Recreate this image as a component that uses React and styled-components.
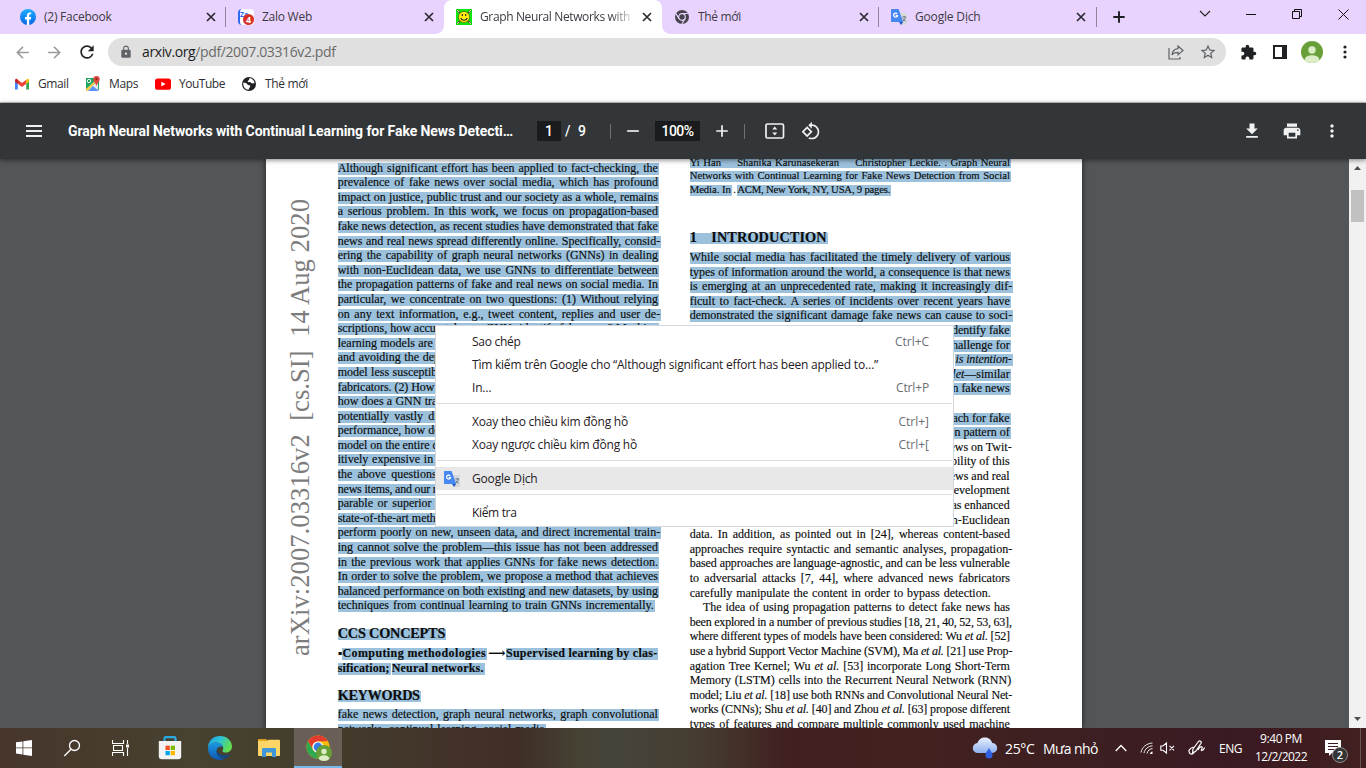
import React, { useLayoutEffect, useRef } from 'react';
import styled, { createGlobalStyle, css } from 'styled-components';
import { MdRemove, MdPrint, MdMoreVert, MdLock, MdExtension, MdStarBorder, MdRefresh, MdArrowBack, MdArrowForward, MdRotate90DegreesCcw } from 'react-icons/md';

const UI = '"Open Sans", "Noto Sans", sans-serif';
const SERIF = '"Liberation Serif", "DejaVu Serif", serif';

const Global = createGlobalStyle`
  * { box-sizing: border-box; }
  body { margin: 0; overflow: hidden; background: #fff; font-family: ${UI}; font-size: 12px; }
  svg { display: block; flex: none; }
`;

/* ---------- text that fills a known width ---------- */
const FitSpan = styled.span`
  display: inline-block;
  white-space: pre;
`;

function Fit({ w, justify, children }) {
  const ref = useRef(null);
  useLayoutEffect(() => {
    const el = ref.current;
    el.style.letterSpacing = '';
    el.style.wordSpacing = '';
    const box = el.getBoundingClientRect();
    const natural = Math.max(box.width, box.height);
    const text = el.textContent;
    const gaps = text.split(' ').length - 1;
    const room = w - natural;
    if (justify && gaps > 0 && room > 0) {
      el.style.wordSpacing = `${room / gaps}px`;
    } else {
      el.style.letterSpacing = `${room / text.length}px`;
    }
  }, [w, justify, children]);
  return <FitSpan ref={ref}>{children}</FitSpan>;
}

/* ---------- frame ---------- */
const Screen = styled.div`
  width: 1366px;
  height: 768px;
  display: flex;
  flex-direction: column;
  overflow: hidden;
`;

/* ---------- tab strip ---------- */
const TabStrip = styled.div`
  height: 34px;
  flex: none;
  display: flex;
  background: #e8d3fe;
  padding-left: 8px;
`;
const Tab = styled.div`
  width: ${p => p.$w}px;
  flex: none;
  height: 34px;
  display: flex;
  align-items: center;
  padding: 0 7px 0 12px;
  gap: 8px;
  color: #3c3a42;
  position: relative;
  &:nth-child(5) { padding-right: 8px; }
  ${p => p.$active && css`
    background: #fff;
    border-radius: 8px 8px 0 0;
    &::before, &::after {
      content: '';
      position: absolute;
      bottom: 0;
      width: 8px;
      height: 8px;
    }
    &::before { left: -8px; background: radial-gradient(circle at 0 0, transparent 7.5px, #fff 8px); }
    &::after { right: -8px; background: radial-gradient(circle at 100% 0, transparent 7.5px, #fff 8px); }
  `}
  ${p => p.$line && css`
    &::after {
      content: '';
      position: absolute;
      right: 0;
      top: 7px;
      width: 1px;
      height: 20px;
      background: #8f849b;
    }
  `}
`;
const TabTitle = styled.div`
  flex: 1;
  height: 18px;
  line-height: 18px;
  overflow: hidden;
  white-space: pre;
  ${p => p.$fade && css`mask-image: linear-gradient(90deg, #000 130px, transparent 156px);`}
`;
const NewTab = styled.div`
  width: 44px;
  display: flex;
  align-items: center;
  justify-content: center;
`;
const WindowButtons = styled.div`
  margin-left: auto;
  display: flex;
  height: 28px;
`;
const WindowButton = styled.div`
  width: 46px;
  display: flex;
  align-items: center;
  justify-content: center;
`;
const FavBox = styled.div`
  position: relative;
  width: 16px;
  height: 16px;
  flex: none;
`;
const ZaloTile = styled.div`
  width: 16px;
  height: 16px;
  border-radius: 4px;
  background: #fff;
  border-left: 2px solid #2c6cf0;
  color: #2c6cf0;
  font: bold 7px/12px "Open Sans", sans-serif;
`;
const FavBadge = styled.div`
  position: absolute;
  right: 0;
  bottom: 0;
  width: 11px;
  height: 11px;
  border-radius: 50%;
  background: #d93025;
  color: #fff;
  font: bold 9px/11px "Open Sans", sans-serif;
  text-align: center;
`;

const Close = ({ s = 8 }) => (
  <svg width="16" height="16" viewBox="-8 -8 16 16">
    <path d={`M${-s / 2} ${-s / 2}L${s / 2} ${s / 2}M${s / 2} ${-s / 2}L${-s / 2} ${s / 2}`} stroke="#2b2a30" strokeWidth="1.7" />
  </svg>
);
const Facebook = () => (
  <svg width="16" height="16" viewBox="0 0 16 16">
    <defs><linearGradient id="fb" x1="0" y1="0" x2="0" y2="1"><stop offset="0" stopColor="#1badff" /><stop offset="1" stopColor="#0866e6" /></linearGradient></defs>
    <circle cx="8" cy="8" r="8" fill="url(#fb)" />
    <path d="M6.900 16v-5.600H5V8h1.900V6.300C6.900 4.400 8 3.400 9.700 3.400c.8 0 1.500.15 1.500.15v1.800h-.9c-.9 0-1.100.5-1.100 1.100V8h2l-.35 2.400H9.200V16z" fill="#fff" />
  </svg>
);
const Smiley = () => (
  <svg width="16" height="16" viewBox="0 0 16 16">
    <rect width="16" height="16" fill="#0be80b" />
    <path d="M1 1l14 14M15 1L1 15" stroke="#5a4a2a" strokeWidth="1.600" />
    <path d="M1 1l2 2M15 1l-2 2M1 15l2-2M15 15l-2-2" stroke="#e8d8a0" strokeWidth="1" />
    <circle cx="8" cy="8" r="5.600" fill="#ffee10" stroke="#5a5a00" strokeWidth=".7" />
    <path d="M6.300 5v2M9.700 5v2M4.800 9c1 3 5.400 3 6.400 0" stroke="#222" strokeWidth="1.100" fill="none" />
  </svg>
);
const ChromeMono = () => (
  <svg width="16" height="16" viewBox="0 0 16 16">
    <circle cx="8" cy="8" r="7" fill="#45434c" />
    <circle cx="8" cy="8" r="3.300" fill="none" stroke="#e8d3fe" strokeWidth="1.200" />
    <path d="M8 4.500h6.500M5 9.700L1.800 4.200M11 9.800L7.800 15" stroke="#e8d3fe" strokeWidth="1.200" />
  </svg>
);
const Translate = () => (
  <svg width="16" height="16" viewBox="0 0 16 16">
    <path d="M8 4h7.200c.5 0 .8.300.8.800v10.400c0 .5-.3.800-.8.800H10z" fill="#d5d8dc" />
    <path d="M1 0h6.600l4.600 13H1c-.6 0-1-.4-1-1V1c0-.6.4-1 1-1z" fill="#4688f1" />
    <path d="M8 13h4.200L10 16z" fill="#2a56c6" />
    <path d="M11.500 8H15M13.200 7v1M14.500 8c-.3 2-1.500 3.400-2.600 4M12 9.500c.6 1.200 1.500 2 2.600 2.600" stroke="#5f6f80" strokeWidth=".9" fill="none" />
    <path d="M6.200 4.900A2 2 0 1 0 6.500 6.700H4.700" stroke="#fff" strokeWidth="1.200" fill="none" />
  </svg>
);

const TABS = [
  { w: 218, title: '(2) Facebook', tw: 67.5, icon: <Facebook />, line: true },
  {
    w: 218, title: 'Zalo Web', tw: 50,
    icon: <FavBox><ZaloTile>Za</ZaloTile><FavBadge>4</FavBadge></FavBox>,
  },
  { w: 218, title: 'Graph Neural Networks with C', tw: 160, icon: <Smiley />, active: true },
  { w: 217, title: 'Thẻ mới', tw: 43, icon: <ChromeMono />, line: true },
  { w: 218, title: 'Google Dịch', tw: 65.5, icon: <Translate />, line: true },
];

function Tabs() {
  return (
    <TabStrip>
      {TABS.map(t => (
        <Tab key={t.title} $w={t.w} $active={t.active} $line={t.line}>
          {t.icon}
          <TabTitle $fade={t.active}><Fit w={t.tw}>{t.title}</Fit></TabTitle>
          <Close />
        </Tab>
      ))}
      <NewTab>
        <svg width="12" height="12" viewBox="0 0 12 12"><path d="M6 .3v11.400M.3 6h11.400" stroke="#1f1d24" strokeWidth="1.900" /></svg>
      </NewTab>
      <WindowButtons>
        <WindowButton><svg width="12" height="8" viewBox="0 0 12 8"><path d="M1 1l5 5 5-5" fill="none" stroke="#222" strokeWidth="1.100" /></svg></WindowButton>
        <WindowButton><svg width="10" height="2"><path d="M0 1h10" stroke="#111" strokeWidth="1" shapeRendering="crispEdges" /></svg></WindowButton>
        <WindowButton><svg width="10" height="10" viewBox="0 0 10 10"><path d="M.5 2.500h7v7h-7zM2.500 2.500v-2h7v7h-2" fill="none" stroke="#111" /></svg></WindowButton>
        <WindowButton><svg width="11" height="11" viewBox="0 0 11 11"><path d="M.5.5l10 10M10.500.5l-10 10" stroke="#111" strokeWidth="1" /></svg></WindowButton>
      </WindowButtons>
    </TabStrip>
  );
}

/* ---------- address row ---------- */
const AddressRow = styled.div`
  height: 36px;
  flex: none;
  display: flex;
  align-items: center;
  padding-left: 13px;
  background: #fff;
`;
const NavButton = styled.div`
  width: ${p => p.$w || 32}px;
  flex: none;
  display: flex;
  color: ${p => p.$c || '#222'};
`;
const Omnibox = styled.div`
  width: 1118px;
  flex: none;
  height: 28px;
  margin-right: 11px;
  border-radius: 14px;
  background: #e0e0e0;
  display: flex;
  align-items: center;
  padding: 0 9px 0 11px;
  color: #5f6368;
`;
const Url = styled.div`
  font-size: 14px;
  line-height: 20px;
  flex: 1;
  margin-left: 9px;
  color: #6a6a6a;
  b { font-weight: 400; color: #1c1c1e; }
`;
const OmniIcon = styled.div`
  width: 32px;
  display: flex;
  justify-content: center;
  &:last-child { width: 18px; margin-left: 7px; }
`;
const Actions = styled.div`
  display: flex;
  align-items: center;
  color: #202124;
`;
const ActionCell = styled.div`
  width: ${p => p.$w || 32}px;
  display: flex;
  justify-content: center;
`;

const Person = ({ s }) => (
  <svg width={s} height={s} viewBox="0 0 22 22">
    <defs><clipPath id="pc"><circle cx="11" cy="11" r="11" /></clipPath></defs>
    <circle cx="11" cy="11" r="11" fill="#689f38" />
    <g clipPath="url(#pc)" fill="#dcedc8"><circle cx="11" cy="9" r="3.700" /><ellipse cx="11" cy="19" rx="7.400" ry="4.800" /></g>
  </svg>
);

/* ---------- bookmarks ---------- */
const Bookmarks = styled.div`
  height: 33px;
  flex: none;
  display: flex;
  align-items: center;
  padding: 0 0 5px 14px;
  border-bottom: 1px solid #c9c9c9;
  background: #fff;
  color: #2f2f33;
`;
const Bookmark = styled.div`
  width: ${p => p.$w}px;
  display: flex;
  align-items: center;
  gap: 8px;
`;
const Gmail = () => (
  <svg width="16" height="14" viewBox="0 0 16 14">
    <path d="M1 3v9.500h2.800V6z" fill="#4285f4" /><path d="M15 3v9.500h-2.800V6z" fill="#34a853" />
    <path d="M3.800 2.800L8 6l4.200-3.200v4L8 10 3.800 6.800z" fill="#ea4335" />
    <path d="M1 3.500C1 1.300 3 1 4 2.900v4L1 4.700z" fill="#c5221f" /><path d="M15 3.500c0-2.200-2-2.500-2.800-.6v4L15 4.700z" fill="#fbbc04" />
  </svg>
);
const Maps = () => (
  <svg width="16" height="16" viewBox="0 0 16 16">
    <path d="M1 2h13v12H1z" fill="#1fa463" /><path d="M2 15L13 4v11z" fill="#e8eaed" /><path d="M1 13L13 2h1L3 15H1z" fill="#ffd04b" />
    <path d="M3 15l5-5 6 5z" fill="#5a95f5" /><circle cx="4" cy="5" r="1.700" fill="none" stroke="#fff" strokeWidth=".9" />
    <path d="M11.500 0a3.200 3.200 0 0 1 3.200 3.200C14.700 6 12 7 11.500 10.500 11 7 8.300 6 8.300 3.200A3.200 3.200 0 0 1 11.500 0z" fill="#dd4b3e" /><circle cx="11.500" cy="3.200" r="1.100" fill="#822" />
  </svg>
);
const YouTube = () => (
  <svg width="16" height="16" viewBox="0 0 16 16"><rect y="2.400" width="16" height="11.400" rx="2.600" fill="#f00" /><path d="M6.300 5.700v4.800l4.300-2.400z" fill="#fff" /></svg>
);
const Globe = () => (
  <svg width="16" height="16" viewBox="0 0 16 16">
    <circle cx="8" cy="8" r="7" fill="#202124" />
    <path d="M2.300 6.500c1.500.3 3.500.2 4 1.800.3 1 1.500.8 2.300 1 1.200.4.800 1.700 0 2.300-.7.600-.4 1.600-1.200 2.200-2.900-.2-5.600-3-5.100-7.300zM8.500 2c-.6 1 .2 1.700-.8 2.300-.6.500-1.200.6-.9 1.500.6.900 1.800-.3 2.600.4.700.7 1.300 1.500 2.500 1.100.8-.3 1.300-.1 1.700 0C13.400 4.500 11 2.200 8.500 2z" fill="#fff" />
  </svg>
);

/* ---------- pdf toolbar ---------- */
const PdfBar = styled.div`
  height: 56px;
  flex: none;
  display: flex;
  align-items: center;
  background: #323639;
  color: #f1f1f1;
  font-family: Roboto, sans-serif;
  font-size: 14px;
  box-shadow: 0 1px 5px rgba(0, 0, 0, .5);
  position: relative;
  z-index: 2;
  padding-left: 24px;
`;
const PdfTitle = styled.div`
  width: 469px;
  margin-left: 24px;
  font-weight: 700;
  color: #fff;
`;
const DarkField = styled.div`
  width: ${p => p.$w}px;
  height: 20px;
  background: #191b1c;
  display: flex;
  align-items: center;
  justify-content: center;
  color: #fff;
  font-weight: 500;
`;
const PageTotal = styled.div`
  width: 45px;
  padding-left: 4px;
  color: #fff;
  font-weight: 500;
  white-space: pre;
`;
const Rule = styled.div`
  width: 1px;
  height: 15px;
  background: #6d7073;
  margin: 0 ${p => p.$r}px 0 ${p => p.$l || 0}px;
`;
const PdfIcon = styled.div`
  width: ${p => p.$w}px;
  display: flex;
`;
const PdfRight = styled.div`
  margin-left: auto;
  display: flex;
  padding-right: 24px;
  gap: 20px;
`;

/* ---------- viewer ---------- */
const Viewer = styled.div`
  height: 569px;
  flex: none;
  display: flex;
  background: #525659;
  position: relative;
  overflow: hidden;
`;
const Page = styled.div`
  width: 816px;
  height: 569px;
  margin: 0 auto 0 266px;
  background: #fff;
  box-shadow: 0 0 5px 1px rgba(0, 0, 0, .45);
  display: flex;
  overflow: hidden;
  color: #0c0c0c;
  font-family: ${SERIF};
  font-size: 12px;
`;
const Margin = styled.div`
  width: 71.7px;
  flex: none;
  padding: 497px 0 0 19px;
`;
const Stamp = styled.div`
  height: 0;
  width: 30px;
  line-height: 30px;
  font-size: 26.6px;
  color: #7d7d7d;
  transform: rotate(-90deg);
  transform-origin: 0 0;
  white-space: pre;
`;
const Column = styled.div`
  width: 321px;
  flex: none;
  margin-right: ${p => p.$r || 0}px;
  padding-top: ${p => p.$top || 0}px;
  -webkit-text-stroke: 0.15px #0c0c0c;
`;
const Line = styled.div`
  height: ${p => p.$pitch || 14.6}px;
  font-size: ${p => p.$size || 12}px;
  font-weight: ${p => p.$bold ? 700 : 400};
  margin-left: ${p => p.$indent || 0}px;
  margin-right: ${p => -(p.$hang || 0)}px;
  white-space: pre;
  display: flex;
  justify-content: ${p => p.$right ? 'flex-end' : 'flex-start'};
`;
const Mark = styled.div`
  flex: none;
  height: ${p => p.$h || 12}px;
  line-height: ${p => (p.$h || 12) - 2}px;
  padding-right: 1px;
  background: ${p => p.$on ? '#9bc1dc' : 'transparent'};
`;
const Space = styled.div`
  height: ${p => p.$h}px;
`;

const LEFT = [
  'Although significant effort has been applied to fact-checking, the',
  'prevalence of fake news over social media, which has profound',
  'impact on justice, public trust and our society as a whole, remains',
  'a serious problem. In this work, we focus on propagation-based',
  'fake news detection, as recent studies have demonstrated that fake',
  'news and real news spread differently online. Specifically, consid-',
  'ering the capability of graph neural networks (GNNs) in dealing',
  'with non-Euclidean data, we use GNNs to differentiate between',
  'the propagation patterns of fake and real news on social media. In',
  'particular, we concentrate on two questions: (1) Without relying',
  'on any text information, e.g., tweet content, replies and user de-',
  'scriptions, how accurately can GNNs identify fake news? Machine',
  'learning models are known to be vulnerable to adversarial attacks,',
  'and avoiding the dependence on text-based features can make the',
  'model less susceptible to the manipulation of advanced fake news',
  'fabricators. (2) How to deal with new, unseen data? In other words,',
  'how does a GNN trained on a given dataset perform on a new and',
  'potentially vastly different dataset? If it achieves unsatisfactory',
  'performance, how do we solve the problem without re-training the',
  'model on the entire data from scratch, which would become prohib-',
  'itively expensive in practice as the data volumes grow? We study',
  'the above questions on two datasets with thousands of labelled',
  'news items, and our results show that GNNs can indeed achieve com-',
  'parable or superior performance without any text information to',
  'state-of-the-art methods. However, GNNs trained on a dataset may',
  'perform poorly on new, unseen data, and direct incremental train-',
  'ing cannot solve the problem—this issue has not been addressed',
  'in the previous work that applies GNNs for fake news detection.',
  'In order to solve the problem, we propose a method that achieves',
  'balanced performance on both existing and new datasets, by using',
  'techniques from continual learning to train GNNs incrementally.',
];

const RIGHT = [
  { t: 'While social media has facilitated the timely delivery of various', on: true },
  { t: 'types of information around the world, a consequence is that news', on: true },
  { t: 'is emerging at an unprecedented rate, making it increasingly dif-', on: true },
  { t: 'ficult to fact-check. A series of incidents over recent years have', on: true },
  { t: 'demonstrated the significant damage fake news can cause to soci-', on: true },
  { t: 'to identify fake', on: true, right: true },
  { t: 'a challenge for', on: true, right: true },
  { t: <Fit w={56.2}><i>is intention-</i></Fit>, on: true, right: true, hang: 2 },
  { t: <><i>outlet</i>—similar</>, on: true, right: true },
  { t: 'on fake news', on: true, right: true },
  { t: '' },
  { t: 'approach for fake', on: true, right: true },
  { t: 'on pattern of', on: true, right: true },
  { t: 'news on Twit-', right: true, hang: 2 },
  { t: 'ability of this', right: true },
  { t: 'news and real', right: true },
  { t: 'development', right: true },
  { t: 'has enhanced', right: true },
  { t: 'non-Euclidean', right: true },
  { t: 'data. In addition, as pointed out in [24], whereas content-based' },
  { t: 'approaches require syntactic and semantic analyses, propagation-' },
  { t: 'based approaches are language-agnostic, and can be less vulnerable' },
  { t: 'to adversarial attacks [7, 44], where advanced news fabricators' },
  { t: 'carefully manipulate the content in order to bypass detection.', w: 301 },
  { t: 'The idea of using propagation patterns to detect fake news has', indent: 13.3 },
  { t: 'been explored in a number of previous studies [18, 21, 40, 52, 53, 63],', w: 322 },
  { t: <>where different types of models have been considered: Wu <i>et al.</i> [52]</> },
  { t: <>use a hybrid Support Vector Machine (SVM), Ma <i>et al.</i> [21] use Prop-</>, w: 322.5 },
  { t: <>agation Tree Kernel; Wu <i>et al.</i> [53] incorporate Long Short-Term</> },
  { t: 'Memory (LSTM) cells into the Recurrent Neural Network (RNN)', w: 321.5 },
  { t: <>model; Liu <i>et al.</i> [18] use both RNNs and Convolutional Neural Net-</>, w: 322.5 },
  { t: <>works (CNNs); Shu <i>et al.</i> [40] and Zhou <i>et al.</i> [63] propose different</> },
  { t: 'types of features and compare multiple commonly used machine' },
];

const hangs = t => typeof t === 'string' && t.endsWith('-');

function LeftColumn() {
  return (
    <Column $top={3.6} $r={31}>
      {LEFT.map((t, i) => (
        <Line key={i}>
          <Mark $on><Fit justify w={i === 30 ? 316 : hangs(t) ? 322.5 : 320.2}>{t}</Fit></Mark>
        </Line>
      ))}
      <Space $h={14.2} />
      <Line $bold $size={14.3} $pitch={19.1}><Mark $on $h={11}><Fit w={107.5}>CCS CONCEPTS</Fit></Mark></Line>
      <Line $bold>
        <Mark><Fit w={6.5}>{'▪ '}</Fit></Mark>
        <Mark $on><Fit w={143.5}>Computing methodologies</Fit></Mark>
        <Mark><Fit w={18}>{' ⟶ '}</Fit></Mark>
        <Mark $on><Fit w={151.5}>Supervised learning by clas-</Fit></Mark>
      </Line>
      <Line $bold>
        <Mark $on><Fit w={52}>sification;</Fit></Mark>
        <Mark><Fit w={2}>{' '}</Fit></Mark>
        <Mark $on><Fit w={92}>Neural networks.</Fit></Mark>
      </Line>
      <Space $h={13.8} />
      <Line $bold $size={14.3} $pitch={17.9}><Mark $on $h={11}><Fit w={82}>KEYWORDS</Fit></Mark></Line>
      <Line><Mark $on><Fit justify w={320.2}>fake news detection, graph neural networks, graph convolutional</Fit></Mark></Line>
      <Line><Mark $on><Fit justify w={207}>networks, continual learning, social media</Fit></Mark></Line>
    </Column>
  );
}

function RightColumn() {
  return (
    <Column>
      <Line $size={10.7} $pitch={12.4}><Mark $on $h={9}><Fit justify w={320.2}>{'Yi Han\u2003\u2002Shanika Karunasekeran\u2003\u2002Christopher Leckie. . Graph Neural'}</Fit></Mark></Line>
      <Line $size={10.7} $pitch={13.5}><Mark $on $h={11}><Fit justify w={320.2}>Networks with Continual Learning for Fake News Detection from Social</Fit></Mark></Line>
      <Line $size={10.7} $pitch={13.6}>
        <Mark $on $h={11}><Fit justify w={41}>Media. In</Fit></Mark>
        <Mark $h={11}><Fit w={5.5}>{' . '}</Fit></Mark>
        <Mark $on $h={11}><Fit justify w={153}>ACM, New York, NY, USA, 9 pages.</Fit></Mark>
      </Line>
      <Space $h={34.5} />
      <Line $bold $size={14.3} $pitch={19}><Mark $on $h={11}><Fit w={137}>{'1\u2003INTRODUCTION'}</Fit></Mark></Line>
      {RIGHT.map((l, i) => (
        <Line key={i} $right={l.right} $indent={l.indent} $hang={l.hang}>
          {l.t && (
            <Mark $on={l.on}>
              {l.right ? l.t : <Fit justify w={l.w || (hangs(l.t) ? 322.5 : 320.2) - (l.indent || 0)}>{l.t}</Fit>}
            </Mark>
          )}
        </Line>
      ))}
    </Column>
  );
}

const ScrollTrack = styled.div`
  width: 17px;
  height: 569px;
  background: #f1f1f1;
  display: flex;
  flex-direction: column;
  align-items: center;
  padding: 7px 0;
`;
const Thumb = styled.div`
  width: 13px;
  height: 32px;
  margin: 20px 0 auto;
  background: #c1c1c1;
`;

/* ---------- context menu ---------- */
const Menu = styled.div`
  position: absolute;
  left: 435px;
  top: 325px;
  width: 519px;
  height: 202px;
  background: #fff;
  border: 1px solid #d4d7db;
  padding: 4px 0 2px;
  z-index: 5;
  font-size: 12px;
  color: #1f2023;
`;
const MenuItem = styled.div`
  height: 23px;
  display: flex;
  align-items: center;
  padding: 0 24px 0 8px;
  background: ${p => p.$hover ? '#e8e8e8' : 'transparent'};
`;
const MenuIcon = styled.div`
  width: 28px;
  display: flex;
`;
const Shortcut = styled.div`
  margin-left: auto;
  color: #6a6d72;
`;
const MenuRule = styled.div`
  height: 11px;
  margin: 0 1px;
  padding-top: 4px;
  &::before { content: ''; display: block; height: 1px; background: #dcdde1; }
`;
const Item = ({ w, kw, k, icon, hover, children }) => (
  <MenuItem $hover={hover}>
    <MenuIcon>{icon}</MenuIcon>
    <Fit w={w}>{children}</Fit>
    {k && <Shortcut><Fit w={kw}>{k}</Fit></Shortcut>}
  </MenuItem>
);

/* ---------- taskbar ---------- */
const Taskbar = styled.div`
  height: 40px;
  flex: none;
  display: flex;
  align-items: center;
  color: #fff;
  background: linear-gradient(90deg, #47362c 0, #473b2d 90px, #474230 200px, #423b2c 350px, #433029 480px, #3f2d26 515px, #464234 580px, #46443a 615px, #453c31 700px, #432c27 750px, #401f1f 790px, #43211f 900px, #3c1f22 1100px, #3a1a22 1230px, #40201f 1366px);
`;
const TaskCell = styled.div`
  width: ${p => p.$w}px;
  height: 40px;
  flex: none;
  display: flex;
  align-items: center;
  justify-content: center;
  position: relative;
  ${p => p.$active && css`
    background: #695f57;
    border-bottom: 2px solid #76b9ed;
  `}
`;
const Tray = styled.div`
  margin-left: auto;
  width: 394px;
  height: 40px;
  display: flex;
  align-items: center;
`;
const TrayCell = styled.div`
  width: ${p => p.$w}px;
  flex: none;
  display: flex;
  font-size: ${p => p.$size || 12}px;
`;
const Clock = styled.div`
  width: 66px;
  display: flex;
  flex-direction: column;
  align-items: center;
  font-size: 12px;
  line-height: 18px;
  margin-left: -7px;
  padding-bottom: 1px;
`;
const Notice = styled.div`
  position: relative;
  margin-left: 11px;
  width: 36px;
  height: 40px;
  padding-top: 12px;
  border-right: 1px solid #6a5353;
`;
const NoticeBadge = styled.div`
  position: absolute;
  left: 7px;
  top: 19px;
  width: 16px;
  height: 16px;
  border-radius: 50%;
  border: 1px solid #8d8d8d;
  background: #353535;
  font: 600 11px/14px "Open Sans", sans-serif;
  text-align: center;
`;
const ProfileBadge = styled.div`
  position: absolute;
  left: 22px;
  top: 17px;
`;

function TaskIcons() {
  return (
    <>
      <TaskCell $w={48}><svg width="16" height="16" viewBox="0 0 16 16" fill="#fff"><path d="M0 2.300l6.500-.9v6.100H0zM7.300 1.300L16 0v7.500H7.300zM0 8.300h6.500v6.200L0 13.600zM7.300 8.300H16V16l-8.700-1.300z" /></svg></TaskCell>
      <TaskCell $w={48}><svg width="18" height="18" viewBox="0 0 18 18" fill="none" stroke="#fff" strokeWidth="1.300"><circle cx="11.500" cy="6.500" r="5" /><path d="M8 10.200L1.300 17" /></svg></TaskCell>
      <TaskCell $w={48}><svg width="17" height="16" viewBox="0 0 17 16" fill="none" stroke="#fff" strokeWidth="1.100"><path d="M.5 0v3.500h11V0M.5 16v-3.500h11V16M1.500 5.500h9v5h-9zM15.500 0v4M15.500 8v8" /><path d="M14 4.500h3v3h-3z" fill="#fff" stroke="none" /></svg></TaskCell>
      <TaskCell $w={52}>
        <svg width="24" height="24" viewBox="0 0 24 24">
          <path d="M6.500 6V2.500C6.500 1.700 7 1.200 7.800 1.200h8.400c.8 0 1.300.5 1.300 1.300V6" fill="none" stroke="#2aa8e0" strokeWidth="2.200" />
          <path d="M.8 5h22.400v15.500c0 1.500-1 2.700-2.700 2.700h-17c-1.700 0-2.700-1.200-2.700-2.700z" fill="#f3f3f3" />
          <path d="M7.500 9.700h4.300V14H7.500z" fill="#f25022" /><path d="M12.700 9.700H17V14h-4.300z" fill="#7fba00" /><path d="M7.500 14.900h4.300v4.300H7.500z" fill="#00a4ef" /><path d="M12.700 14.900H17v4.300h-4.300z" fill="#ffb900" />
        </svg>
      </TaskCell>
      <TaskCell $w={48}>
        <svg width="24" height="24" viewBox="0 0 24 24">
          <defs>
            <linearGradient id="e1" x1="0" y1="0" x2="1" y2=".4"><stop offset="0" stopColor="#1b9de2" /><stop offset=".5" stopColor="#2cc3d5" /><stop offset="1" stopColor="#62dd52" /></linearGradient>
            <linearGradient id="e2" x1="0" y1="0" x2="0" y2="1"><stop offset="0" stopColor="#1a9ae0" /><stop offset="1" stopColor="#0f56b3" /></linearGradient>
          </defs>
          <path d="M0 12C0 4.500 5.500 0 12 0c7 0 12 5 12 10.500 0 3.500-2.500 6-6 6-2.500 0-4-.8-3.500-1.800C17 11 13 6.500 8.500 6.500 4 6.500.8 9 0 12z" fill="url(#e1)" />
          <path d="M0 12.500C.5 9 4 6.500 8 6.500c4.500 0 7 2.500 7 4.500-3-1.500-6.500.5-6.500 4.500 0 4.500 4 7 7.500 7.500-1.200.6-2.500 1-4 1-7 0-12-5-12-11.500z" fill="url(#e2)" />
          <path d="M8.500 14c-.8 5 4 9 8.500 8.500 2.500-1 4.500-2.800 5.500-4.500-5 2.500-12.500 1.500-14-4z" fill="#114a8b" />
        </svg>
      </TaskCell>
      <TaskCell $w={50}>
        <svg width="22" height="20" viewBox="0 0 22 20">
          <path d="M0 1h8l2 2H0z" fill="#d99a13" /><path d="M0 2.800h9l1.500-1h10.300c.8 0 1.200.4 1.200 1.200V17c0 .6-.4 1-1 1H1c-.6 0-1-.4-1-1z" fill="#fdd667" />
          <path d="M4 11.500c0-.8.500-1.500 1.500-1.500h11c1 0 1.500.7 1.500 1.500V19h-4v-4.500H8V19H4z" fill="#3f96d8" />
        </svg>
      </TaskCell>
      <TaskCell $w={48} $active>
        <svg width="24" height="24" viewBox="-12 -12 24 24">
          <circle r="11.500" fill="#fbbc05" />
          <path d="M-9.960-5.750A11.500 11.500 0 0 1 9.960-5.750H0A5.750 5.750 0 0 0-4.980 2.880z" fill="#e33b2e" />
          <path d="M-9.960-5.750A11.500 11.500 0 0 0 0 11.500L4.980 2.880A5.750 5.750 0 0 1-4.980 2.880z" fill="#2da94f" />
          <circle r="5.600" fill="#fff" /><circle r="4.400" fill="#3a7de8" />
        </svg>
        <ProfileBadge><Person s={16} /></ProfileBadge>
      </TaskCell>
    </>
  );
}

export default function App() {
  return (
    <Screen>
      <Global />
      <Tabs />
      <AddressRow>
        <NavButton $c="#9a9a9d"><MdArrowBack size={19} /></NavButton>
        <NavButton $c="#9a9a9d"><MdArrowForward size={19} /></NavButton>
        <NavButton $w={31}><MdRefresh size={20} /></NavButton>
        <Omnibox>
          <MdLock size={14} />
          <Url><Fit w={193.5}><b>arxiv.org</b>/pdf/2007.03316v2.pdf</Fit></Url>
          <OmniIcon>
            <svg width="16" height="15" viewBox="0 0 16 15" fill="none" stroke="#5f6368" strokeWidth="1.200"><path d="M1 3v11h11v-2" /><path d="M10 1l5 4.500-5 4.300V7.300C7 7.300 5 8.300 4 10c.3-3.500 2.700-6 6-6.300z" /></svg>
          </OmniIcon>
          <OmniIcon><MdStarBorder size={18} /></OmniIcon>
        </Omnibox>
        <Actions>
          <ActionCell $w={22}><MdExtension size={17} /></ActionCell>
          <ActionCell $w={42}><svg width="14" height="14" viewBox="0 0 14 14"><path d="M0 0h14v14H0zM2 2v10h7V2z" fill="#202124" fillRule="evenodd" /></svg></ActionCell>
          <ActionCell $w={22}><Person s={22} /></ActionCell>
          <ActionCell $w={43}><svg width="4" height="14" viewBox="0 0 4 14" fill="#202124"><circle cx="2" cy="2" r="1.600" /><circle cx="2" cy="7" r="1.600" /><circle cx="2" cy="12" r="1.600" /></svg></ActionCell>
        </Actions>
      </AddressRow>
      <Bookmarks>
        <Bookmark $w={71}><Gmail /><Fit w={30.5}>Gmail</Fit></Bookmark>
        <Bookmark $w={70}><Maps /><Fit w={29}>Maps</Fit></Bookmark>
        <Bookmark $w={86}><YouTube /><Fit w={46}>YouTube</Fit></Bookmark>
        <Bookmark $w={90}><Globe /><Fit w={43}>Thẻ mới</Fit></Bookmark>
      </Bookmarks>
      <PdfBar>
        <svg width="20" height="20" viewBox="0 0 20 20"><path d="M2 5h16M2 10h16M2 15h16" stroke="#f1f1f1" strokeWidth="2" /></svg>
        <PdfTitle><Fit w={445}>Graph Neural Networks with Continual Learning for Fake News Detecti…</Fit></PdfTitle>
        <DarkField $w={24}>1</DarkField>
        <PageTotal><Fit w={21}>{'/  9'}</Fit></PageTotal>
        <Rule $l={4} $r={12} />
        <PdfIcon $w={32}><MdRemove size={20} /></PdfIcon>
        <DarkField $w={45}><Fit w={32}>100%</Fit></DarkField>
        <PdfIcon $w={32}><svg width="44" height="20" viewBox="-12 0 44 20" stroke="#f1f1f1" strokeWidth="1.700"><path d="M10 4.200v11.600M4.200 10h11.600" /></svg></PdfIcon>
        <Rule $l={12} $r={20} />
        <PdfIcon $w={36}>
          <svg width="20" height="18" viewBox="0 0 20 18"><rect x="1" y="2" width="17.500" height="14" rx="1.500" fill="none" stroke="#f1f1f1" strokeWidth="1.700" /><path d="M9.750 4.500l2.500 3h-5zM9.750 13.500l2.500-3h-5z" fill="#f1f1f1" /></svg>
        </PdfIcon>
        <PdfIcon $w={20}><MdRotate90DegreesCcw size={20} /></PdfIcon>
        <PdfRight>
          <svg width="20" height="20" viewBox="0 0 24 24" fill="#f1f1f1"><path d="M19 9h-4V3H9v6H5l7 7 7-7zM5 18v2h14v-2z" /></svg>
          <MdPrint size={20} />
          <MdMoreVert size={20} />
        </PdfRight>
      </PdfBar>
      <Viewer>
        <Page>
          <Margin>
            <Stamp><Fit w={457}>{'arXiv:2007.03316v2  [cs.SI]  14 Aug 2020'}</Fit></Stamp>
          </Margin>
          <LeftColumn />
          <RightColumn />
        </Page>
        <ScrollTrack>
          <svg width="7" height="4" viewBox="0 0 7 4"><path d="M0 4l3.500-4L7 4z" fill="#505050" /></svg>
          <Thumb />
          <svg width="7" height="4" viewBox="0 0 7 4"><path d="M0 0l3.500 4L7 0z" fill="#505050" /></svg>
        </ScrollTrack>
      </Viewer>
      <Taskbar>
        <TaskIcons />
        <Tray>
          <TrayCell $w={33}>
            <svg width="26" height="24" viewBox="0 0 26 24">
              <defs><linearGradient id="cl" x1="0" y1="0" x2="0" y2="1"><stop offset="0" stopColor="#e8f0ff" /><stop offset="1" stopColor="#8fb0ee" /></linearGradient></defs>
              <path d="M6 17a5 5 0 0 1-.5-10C6.500 3.500 9.500 1.500 13 1.500c4 0 6.500 2.500 7.200 5.500a5 5 0 0 1 0 10z" fill="url(#cl)" />
              <path d="M17 12c1.500 3 3.500 4.500 3.500 7a3.500 3.500 0 0 1-7 0c0-2.500 2-4 3.500-7z" fill="#2f5fe0" />
            </svg>
          </TrayCell>
          <TrayCell $w={38} $size={14}><Fit w={29.5}>25°C</Fit></TrayCell>
          <TrayCell $w={72} $size={14}><Fit w={55}>Mưa nhỏ</Fit></TrayCell>
          <TrayCell $w={25}><svg width="12" height="8" viewBox="0 0 12 8"><path d="M.7 7L6 1.500 11.300 7" stroke="#fff" strokeWidth="1.300" fill="none" /></svg></TrayCell>
          <TrayCell $w={20}>
            <svg width="14" height="14" viewBox="0 0 14 14" fill="none" stroke="#eee" strokeWidth="1"><path d="M1 11.500C2 6 6.500 2.500 12.500 2M4 12c.8-4 4-6.800 8.500-7.200M7 12.500c.5-2.700 2.500-4.600 5.500-4.900" /><path d="M10 13c.2-1.500 1.200-2.300 2.500-2.400V13z" fill="#fff" stroke="none" /></svg>
          </TrayCell>
          <TrayCell $w={28}>
            <svg width="16" height="14" viewBox="0 0 16 14" fill="none" stroke="#fff" strokeWidth="1.100"><path d="M.8 5v4.200H3L6.500 12V2L3 5zM9.500 4.800l4.500 4.500M14 4.800L9.500 9.300" /></svg>
          </TrayCell>
          <TrayCell $w={31}>
            <svg width="18" height="18" viewBox="0 0 18 18" fill="none" stroke="#fff" strokeWidth="1.200"><path d="M5 10L10.500 2.500c1.200-1.500 3.500 0 2.500 1.700L8 12l-3.500 2zM5.500 8C2 9-.5 12 2 14.500c2 1.500 4-.5 5-2M10 11c1-2.500 3-4 4-3s-2 4 0 3.500 2-2 2.500-3" /></svg>
          </TrayCell>
          <TrayCell $w={36}><Fit w={23}>ENG</Fit></TrayCell>
          <Clock><Fit w={42}>9:40 PM</Fit><Fit w={52}>12/2/2022</Fit></Clock>
          <Notice>
            <svg width="16" height="16" viewBox="0 0 16 16"><path d="M0 0h16v13H7l-3 3v-3H0z" fill="#fff" /><path d="M3 3.500h10M3 6.500h10M3 9.500h6" stroke="#3d1d22" strokeWidth="1" /></svg>
            <NoticeBadge>2</NoticeBadge>
          </Notice>
        </Tray>
      </Taskbar>
      <Menu>
        <Item w={48.5} k="Ctrl+C" kw={34}>Sao chép</Item>
        <Item w={406}>Tìm kiếm trên Google cho “Although significant effort has been applied to…”</Item>
        <Item w={19.5} k="Ctrl+P" kw={33}>In…</Item>
        <MenuRule />
        <Item w={156} k="Ctrl+]" kw={30.5}>Xoay theo chiều kim đồng hồ</Item>
        <Item w={165} k="Ctrl+[" kw={30.5}>Xoay ngược chiều kim đồng hồ</Item>
        <MenuRule />
        <Item w={65.5} hover icon={<Translate />}>Google Dịch</Item>
        <MenuRule />
        <Item w={44.5}>Kiểm tra</Item>
      </Menu>
    </Screen>
  );
}
